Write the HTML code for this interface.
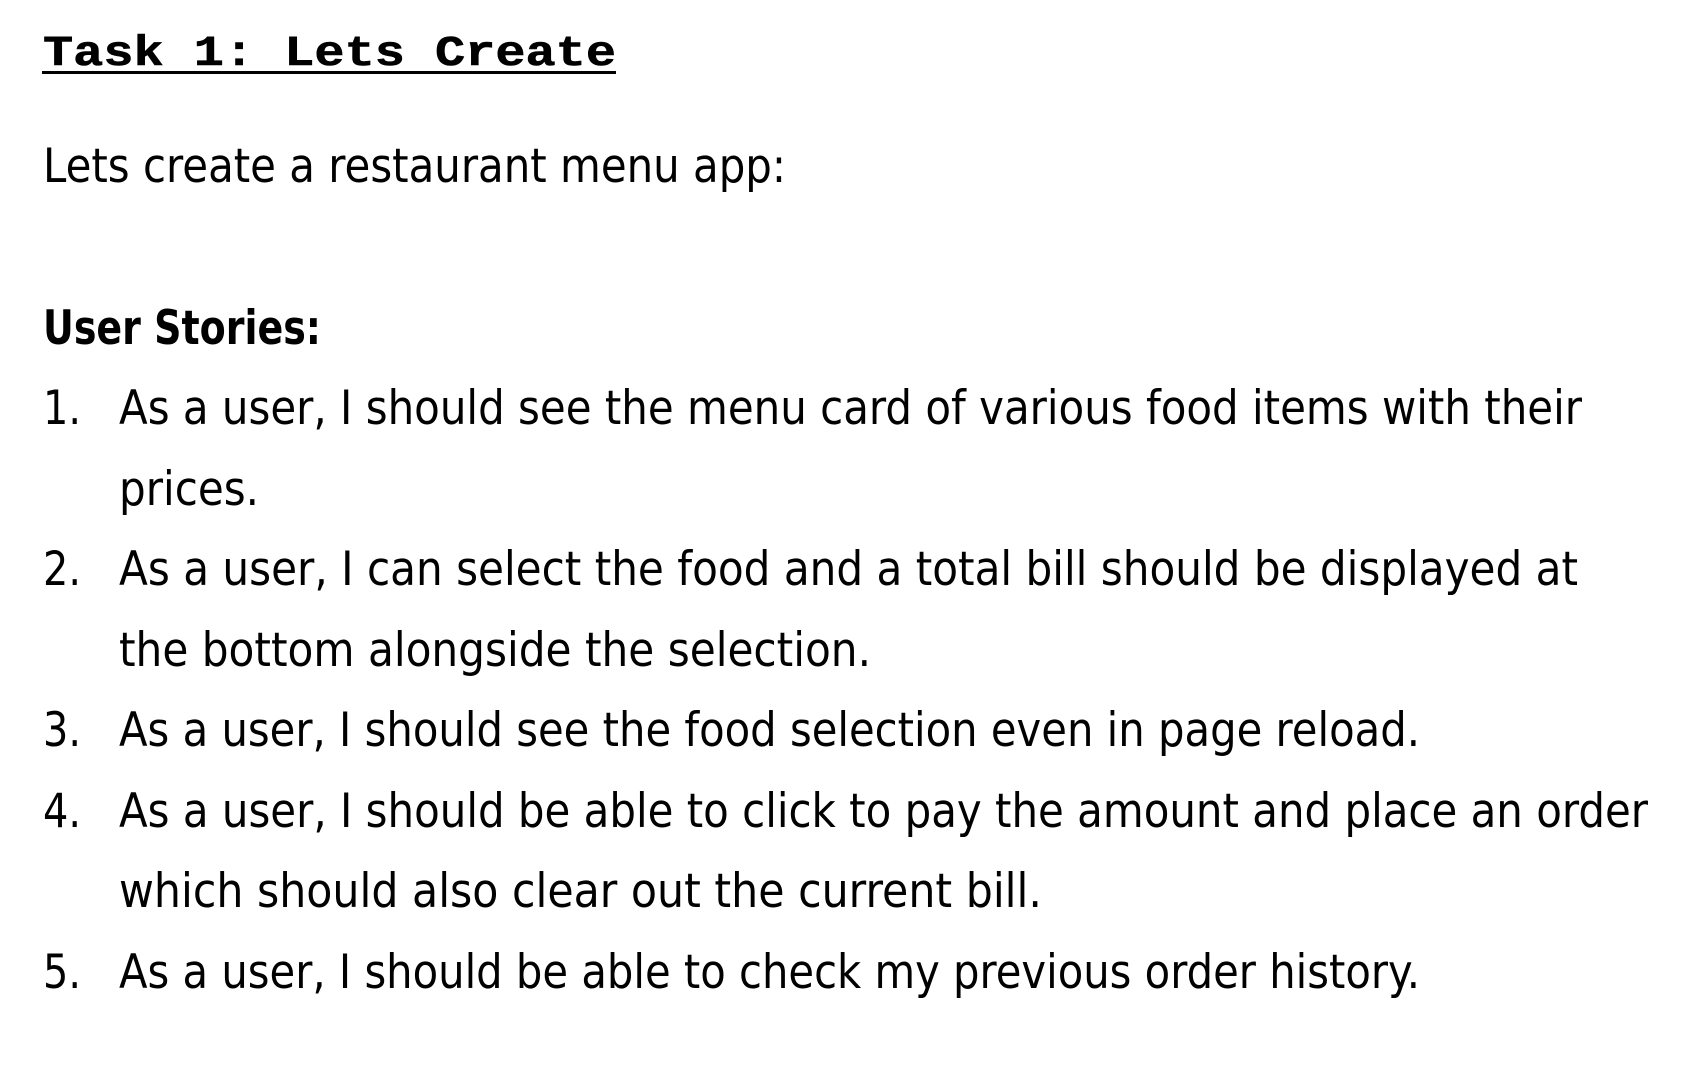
<!DOCTYPE html>
<html><head><meta charset="utf-8"><style>
html,body{margin:0;padding:0;background:#fff;width:1695px;height:1067px;overflow:hidden}
svg{display:block}
text{fill:#000}
.s{font-family:"DejaVu Sans","Liberation Sans",sans-serif;font-size:47px}
.m{font-family:"Liberation Mono",monospace;font-size:43px;font-weight:bold;stroke:#000;stroke-width:0.6}
</style></head><body>
<svg width="1695" height="1067" xmlns="http://www.w3.org/2000/svg">
<text class="m" x="43" y="65" textLength="573" lengthAdjust="spacingAndGlyphs">Task 1: Lets Create</text>
<rect x="42" y="71" width="574" height="3" fill="#000"/>
<text class="s" x="43" y="182" textLength="743" lengthAdjust="spacingAndGlyphs">Lets create a restaurant menu app:</text>
<text class="s" x="43" y="344" font-weight="bold" textLength="278" lengthAdjust="spacingAndGlyphs">User Stories:</text>
<text class="s" x="43" y="424" textLength="38" lengthAdjust="spacingAndGlyphs">1.</text>
<text class="s" x="119" y="424" textLength="1463" lengthAdjust="spacingAndGlyphs">As a user, I should see the menu card of various food items with their</text>
<text class="s" x="119" y="505" textLength="140" lengthAdjust="spacingAndGlyphs">prices.</text>
<text class="s" x="43" y="585" textLength="38" lengthAdjust="spacingAndGlyphs">2.</text>
<text class="s" x="119" y="585" textLength="1459" lengthAdjust="spacingAndGlyphs">As a user, I can select the food and a total bill should be displayed at</text>
<text class="s" x="119" y="666" textLength="752" lengthAdjust="spacingAndGlyphs">the bottom alongside the selection.</text>
<text class="s" x="43" y="746" textLength="38" lengthAdjust="spacingAndGlyphs">3.</text>
<text class="s" x="119" y="746" textLength="1301" lengthAdjust="spacingAndGlyphs">As a user, I should see the food selection even in page reload.</text>
<text class="s" x="43" y="827" textLength="38" lengthAdjust="spacingAndGlyphs">4.</text>
<text class="s" x="119" y="827" textLength="1529" lengthAdjust="spacingAndGlyphs">As a user, I should be able to click to pay the amount and place an order</text>
<text class="s" x="119" y="907" textLength="923" lengthAdjust="spacingAndGlyphs">which should also clear out the current bill.</text>
<text class="s" x="43" y="988" textLength="38" lengthAdjust="spacingAndGlyphs">5.</text>
<text class="s" x="119" y="988" textLength="1301" lengthAdjust="spacingAndGlyphs">As a user, I should be able to check my previous order history.</text>
</svg>
</body></html>
